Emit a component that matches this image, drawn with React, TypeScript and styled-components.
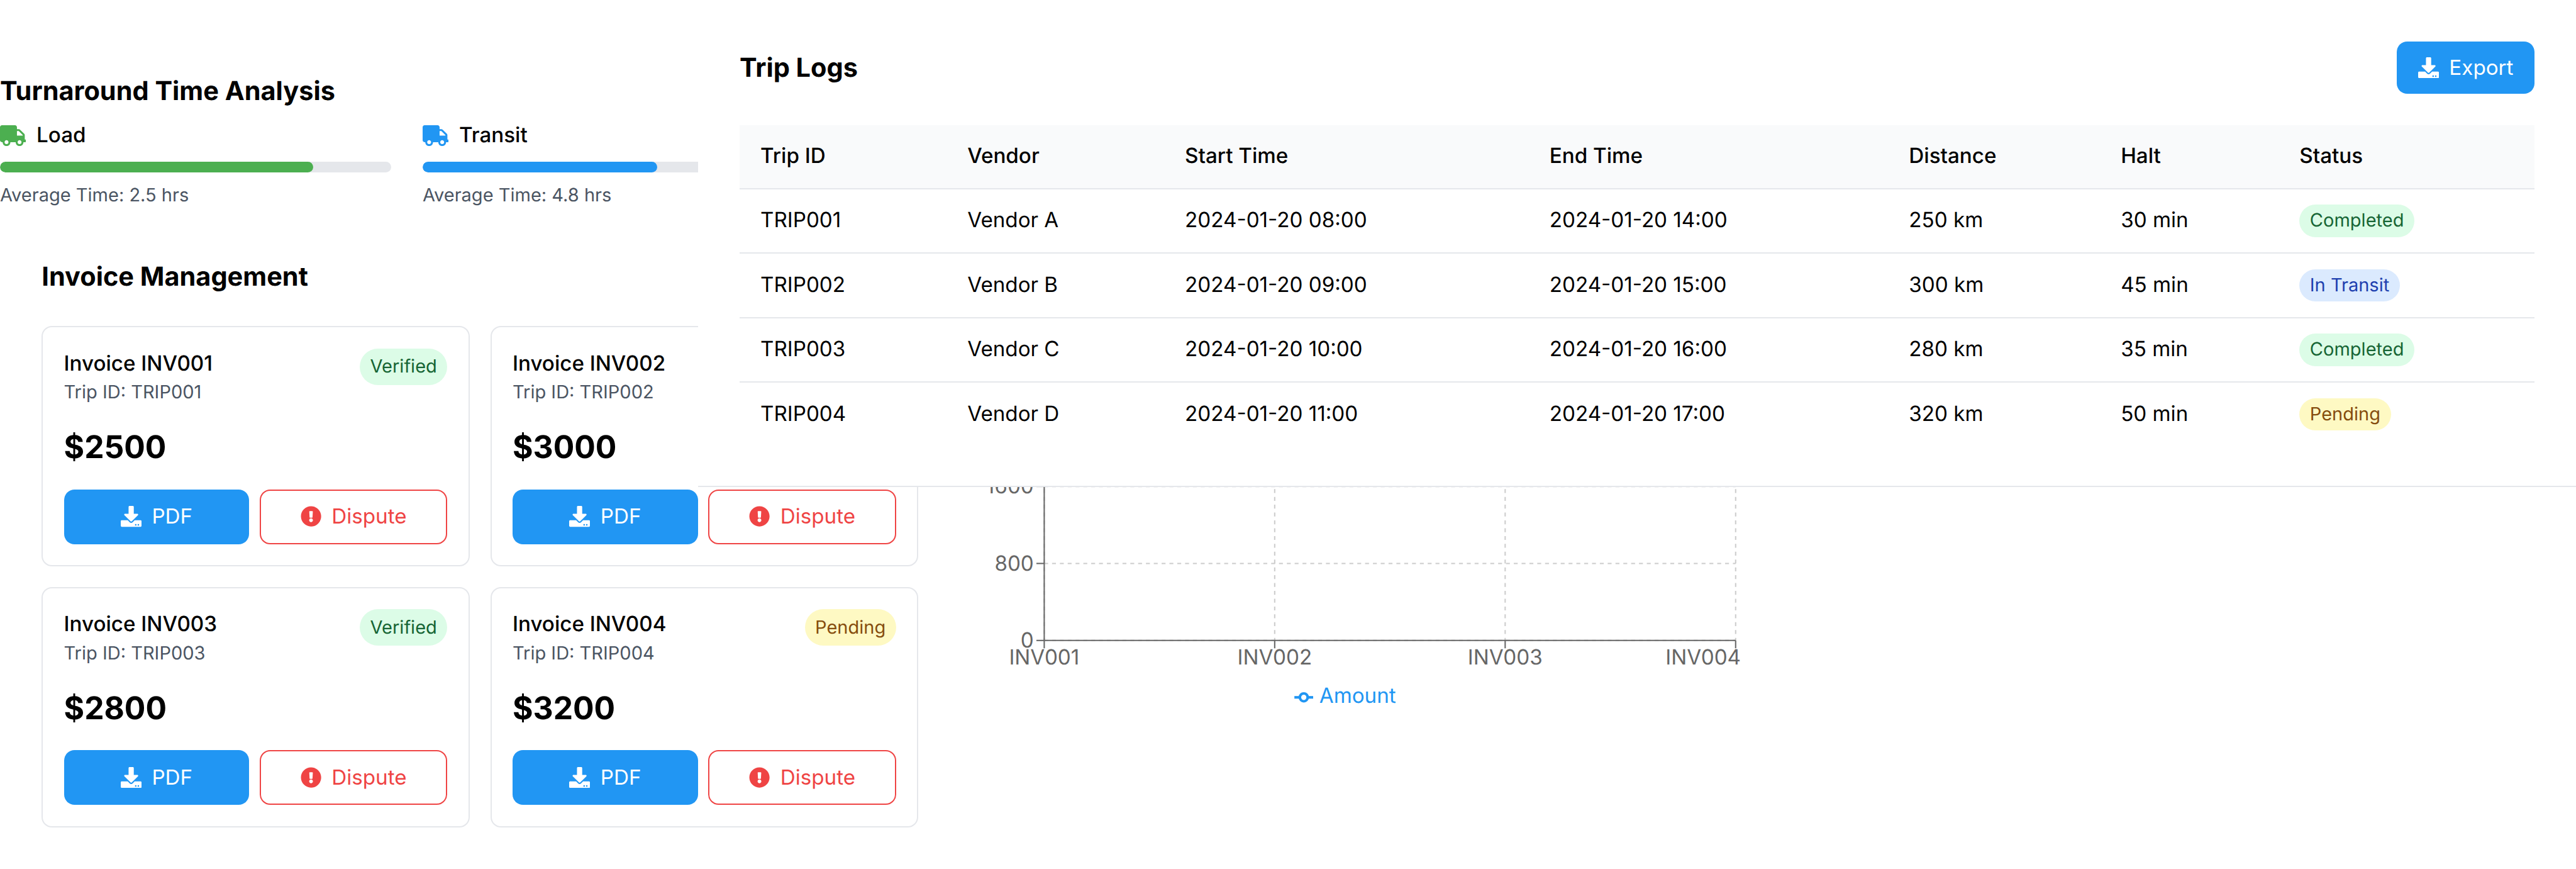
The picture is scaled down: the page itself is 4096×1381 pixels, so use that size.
import React from 'react';
import styled, {createGlobalStyle} from 'styled-components';
import {FaDownload, FaExclamationCircle, FaTruck} from 'react-icons/fa';

// the page was laid out at 1975 css px wide, the window is 4096
const u = (n: number) => `${n * 2.0739}px`;

const GlobalStyle = createGlobalStyle`
    html, body {
        margin: 0;
        padding: 0;
        background: #fff;
    }
    body {
        font-family: Inter, "Liberation Sans", sans-serif;
        color: #000;
        text-rendering: geometricPrecision;
    }
    * {
        box-sizing: border-box;
    }
`;

const Page = styled.div`
    position: relative;
    width: 100vw;
    height: 100vh;
    overflow: hidden;
    padding-top: ${u(56)};
`;

const SectionTitle = styled.h2`
    margin: 0;
    font-size: ${u(20)};
    line-height: ${u(28)};
    font-weight: 700;
`;

const Turnaround = styled.section`
    height: ${u(142)};
    display: flex;
    flex-direction: column;
    gap: ${u(8)};
`;

const MetricRow = styled.div`
    display: grid;
    grid-template-columns: repeat(4, ${u(300)});
    column-gap: ${u(24)};
`;

const Metric = styled.div`
    display: flex;
    flex-direction: column;
    gap: ${u(8)};
`;

const MetricHead = styled.div<{$color: string}>`
    display: flex;
    align-items: center;
    gap: ${u(8)};
    font-size: ${u(16)};
    line-height: ${u(24)};
    font-weight: 500;

    svg {
        width: ${u(20)};
        height: ${u(16)};
        color: ${p => p.$color};
    }
`;

const Track = styled.div`
    height: ${u(8)};
    border-radius: ${u(999)};
    background: #e5e7eb;
    overflow: hidden;
`;

const Fill = styled.div<{$color: string}>`
    height: 100%;
    border-radius: ${u(999)};
    background: ${p => p.$color};
`;

const Muted = styled.div`
    font-size: ${u(14)};
    line-height: ${u(20)};
    color: #4b5563;
`;

const InvoiceSection = styled.section`
    display: grid;
    grid-template-columns: ${u(672)} 1fr;
    column-gap: ${u(32)};
    row-gap: ${u(24)};
    padding-left: ${u(32)};

    ${SectionTitle} {
        grid-column: 1 / -1;
    }
`;

const CardGrid = styled.div`
    display: grid;
    grid-template-columns: repeat(2, ${u(328)});
    gap: ${u(16)};
`;

const Card = styled.div`
    height: ${u(184)};
    padding: ${u(16)};
    border: ${u(1)} solid #e5e7eb;
    border-radius: ${u(8)};
    display: flex;
    flex-direction: column;
    gap: ${u(16)};
`;

const CardHead = styled.div`
    display: flex;
    justify-content: space-between;
    align-items: flex-start;
`;

const CardName = styled.div`
    font-size: ${u(16)};
    line-height: ${u(24)};
    font-weight: 500;
`;

const Badge = styled.span<{$tone: string}>`
    padding: ${u(4)} ${u(8)};
    border-radius: ${u(999)};
    font-size: ${u(14)};
    background: ${p => tones[p.$tone].bg};
    color: ${p => tones[p.$tone].fg};
`;

const CardBadge = styled(Badge)`
    line-height: ${u(20)};
`;

const Amount = styled.div`
    font-size: ${u(24)};
    line-height: ${u(32)};
    font-weight: 700;
`;

const CardActions = styled.div`
    display: flex;
    gap: ${u(8)};
`;

const Button = styled.button`
    display: flex;
    align-items: center;
    justify-content: center;
    gap: ${u(8)};
    padding: ${u(8)} ${u(16)};
    border: none;
    border-radius: ${u(8)};
    font-family: inherit;
    font-size: ${u(16)};
    line-height: ${u(24)};
    background: #2196f3;
    color: #fff;

    svg {
        width: ${u(16)};
        height: ${u(16)};
    }
`;

const WideButton = styled(Button)`
    flex: 1;
`;

const DisputeButton = styled(WideButton)`
    border: ${u(1)} solid #ef4444;
    background: #fff;
    color: #ef4444;
`;

const ChartBox = styled.div`
    width: ${u(620)};
    height: ${u(310)};

    svg {
        display: block;
        width: 100%;
        height: 100%;
    }

    text {
        font-family: Inter, "Liberation Sans", sans-serif;
        font-size: 16px;
    }
`;

// covers the right side of the page, as it does in the screenshot
const TripPanel = styled.section`
    position: absolute;
    top: 0;
    left: ${u(535)};
    right: 0;
    height: ${u(373)};
    padding: ${u(32)} ${u(32)} 0;
    background: #fff;
    border-bottom: ${u(1)} solid #e5e7eb;
`;

const PanelHead = styled.div`
    display: flex;
    align-items: center;
    justify-content: space-between;
    margin-bottom: ${u(24)};
`;

const Table = styled.table`
    width: 100%;
    table-layout: fixed;
    border-collapse: separate;
    border-spacing: 0;
    font-size: ${u(16)};
    line-height: ${u(24)};
`;

const Th = styled.th`
    padding: ${u(12)} ${u(16)};
    text-align: left;
    font-weight: 500;
    background: #f9fafb;
    border-bottom: ${u(1)} solid #e5e7eb;
`;

const Td = styled.td`
    padding: ${u(12)} ${u(16)};
    border-bottom: ${u(1)} solid #e5e7eb;

    tr:last-child > & {
        border-bottom: none;
    }
`;

const tones: {[key: string]: {bg: string, fg: string}} = {
    green: {bg: '#dcfce7', fg: '#166534'},
    blue: {bg: '#dbeafe', fg: '#1e40af'},
    yellow: {bg: '#fef9c3', fg: '#854d0e'},
};

const metrics = [
    {name: 'Load', color: '#4caf50', percent: 80, time: '2.5 hrs'},
    {name: 'Transit', color: '#2196f3', percent: 60, time: '4.8 hrs'},
];

const invoices = [
    {id: 'INV001', trip: 'TRIP001', amount: 2500, status: 'Verified'},
    {id: 'INV002', trip: 'TRIP002', amount: 3000, status: 'Verified'},
    {id: 'INV003', trip: 'TRIP003', amount: 2800, status: 'Verified'},
    {id: 'INV004', trip: 'TRIP004', amount: 3200, status: 'Pending'},
];

const columns = [
    {title: 'Trip ID', width: 158.7},
    {title: 'Vendor', width: 166.8},
    {title: 'Start Time', width: 279.5},
    {title: 'End Time', width: 275.6},
    {title: 'Distance', width: 162.4},
    {title: 'Halt', width: 137},
    {title: 'Status', width: 196},
];

const trips = [
    ['TRIP001', 'Vendor A', '2024-01-20 08:00', '2024-01-20 14:00', '250 km', '30 min', 'Completed'],
    ['TRIP002', 'Vendor B', '2024-01-20 09:00', '2024-01-20 15:00', '300 km', '45 min', 'In Transit'],
    ['TRIP003', 'Vendor C', '2024-01-20 10:00', '2024-01-20 16:00', '280 km', '35 min', 'Completed'],
    ['TRIP004', 'Vendor D', '2024-01-20 11:00', '2024-01-20 17:00', '320 km', '50 min', 'Pending'],
];

const statusTone = (status: string) => {
    if (status === 'Pending') {
        return 'yellow';
    }
    return status === 'In Transit' ? 'blue' : 'green';
};

function InvoiceChart() {
    const left = 64.8;
    const step = 176.7;
    const zero = 241;
    const yFor = (value: number) => zero - (value * 59) / 800;
    const xs = invoices.map((_, i) => left + i * step);
    const ticks = [0, 800, 1600, 2400, 3200];

    return (
        <ChartBox>
            <svg viewBox="0 0 620 310">
                <g stroke="#ccc" strokeDasharray="3 3">
                    {ticks.map(t => <line key={t} x1={left} x2={xs[3]} y1={yFor(t)} y2={yFor(t)} />)}
                    {xs.map(x => <line key={x} x1={x} x2={x} y1={yFor(3200)} y2={zero} />)}
                </g>
                <g stroke="#666">
                    <line x1={left} x2={left} y1={yFor(3200)} y2={zero} />
                    <line x1={left} x2={xs[3]} y1={zero} y2={zero} />
                    {ticks.map(t => <line key={t} x1={left - 6} x2={left} y1={yFor(t)} y2={yFor(t)} />)}
                    {xs.map(x => <line key={x} x1={x} x2={x} y1={zero} y2={zero + 6} />)}
                </g>
                <g fill="#666">
                    {ticks.map(t => <text key={t} x={left - 8} y={yFor(t) + 5.5} textAnchor="end">{t}</text>)}
                    {invoices.map((inv, i) => (
                        <text key={inv.id} x={i === 3 ? xs[3] + 4 : xs[i]} y={259.5} textAnchor={i === 3 ? 'end' : 'middle'}>
                            {inv.id}
                        </text>
                    ))}
                </g>
                <polyline
                    fill="none"
                    stroke="#2196f3"
                    strokeWidth="2"
                    points={invoices.map((inv, i) => `${xs[i]},${yFor(inv.amount)}`).join(' ')}
                />
                <line x1="256.6" x2="271" y1="284.6" y2="284.6" stroke="#2196f3" strokeWidth="2" />
                <circle cx="263.8" cy="284.6" r="3" fill="#fff" stroke="#2196f3" strokeWidth="2" />
                <text x="275.7" y="288.7" fill="#2196f3">Amount</text>
            </svg>
        </ChartBox>
    );
}

export default function App() {
    return (
        <Page>
            <GlobalStyle />
            <Turnaround>
                <SectionTitle>Turnaround Time Analysis</SectionTitle>
                <MetricRow>
                    {metrics.map(metric => (
                        <Metric key={metric.name}>
                            <MetricHead $color={metric.color}>
                                <FaTruck />
                                {metric.name}
                            </MetricHead>
                            <Track>
                                <Fill $color={metric.color} style={{width: `${metric.percent}%`}} />
                            </Track>
                            <Muted>Average Time: {metric.time}</Muted>
                        </Metric>
                    ))}
                </MetricRow>
            </Turnaround>
            <InvoiceSection>
                <SectionTitle>Invoice Management</SectionTitle>
                <CardGrid>
                    {invoices.map(invoice => (
                        <Card key={invoice.id}>
                            <CardHead>
                                <div>
                                    <CardName>Invoice {invoice.id}</CardName>
                                    <Muted>Trip ID: {invoice.trip}</Muted>
                                </div>
                                <CardBadge $tone={statusTone(invoice.status)}>{invoice.status}</CardBadge>
                            </CardHead>
                            <Amount>${invoice.amount}</Amount>
                            <CardActions>
                                <WideButton><FaDownload />PDF</WideButton>
                                <DisputeButton><FaExclamationCircle />Dispute</DisputeButton>
                            </CardActions>
                        </Card>
                    ))}
                </CardGrid>
                <InvoiceChart />
            </InvoiceSection>
            <TripPanel>
                <PanelHead>
                    <SectionTitle>Trip Logs</SectionTitle>
                    <Button><FaDownload />Export</Button>
                </PanelHead>
                <Table>
                    <colgroup>
                        {columns.map(column => <col key={column.title} style={{width: u(column.width)}} />)}
                    </colgroup>
                    <thead>
                        <tr>
                            {columns.map(column => <Th key={column.title}>{column.title}</Th>)}
                        </tr>
                    </thead>
                    <tbody>
                        {trips.map(trip => (
                            <tr key={trip[0]}>
                                {trip.slice(0, 6).map(value => <Td key={value}>{value}</Td>)}
                                <Td><Badge $tone={statusTone(trip[6])}>{trip[6]}</Badge></Td>
                            </tr>
                        ))}
                    </tbody>
                </Table>
            </TripPanel>
        </Page>
    );
}
